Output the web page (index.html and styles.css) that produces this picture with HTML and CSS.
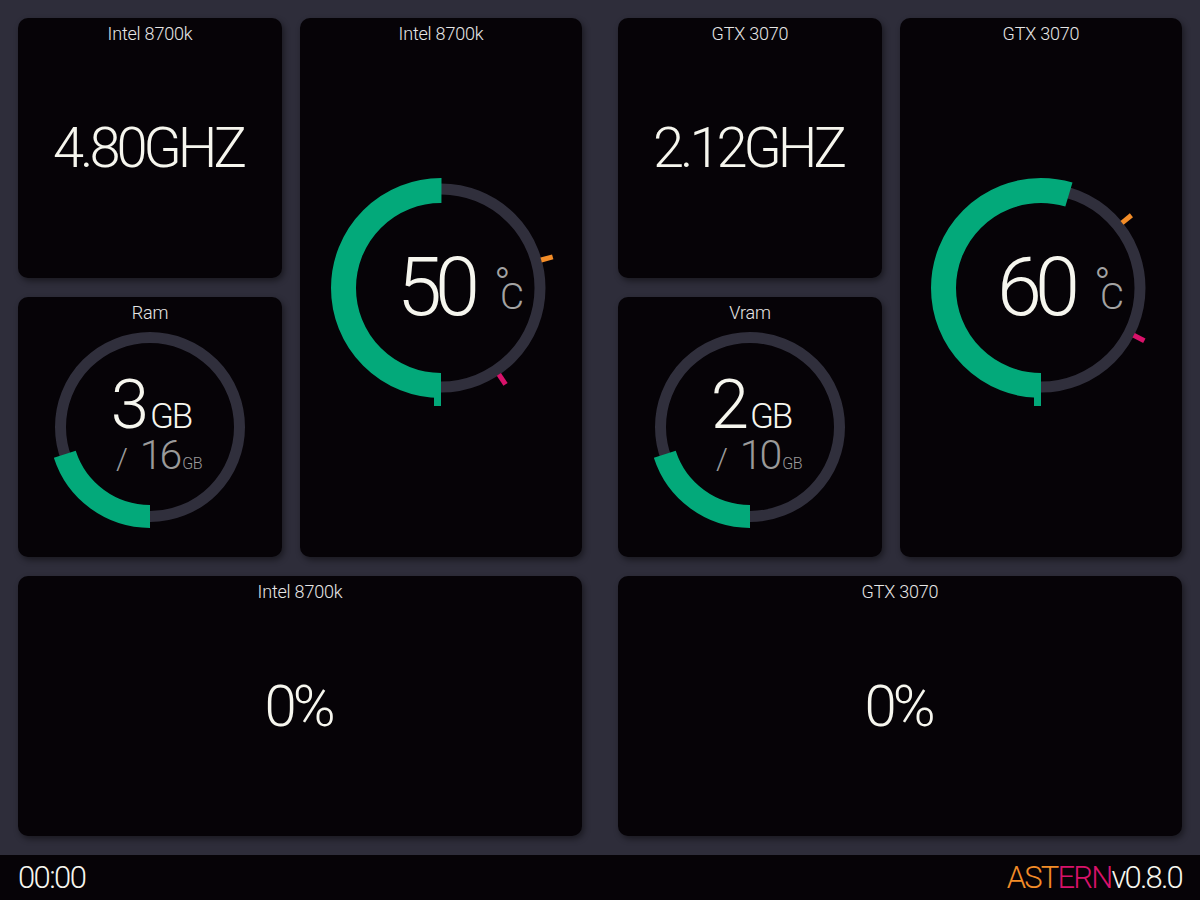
FILE: index.html
```html
<!DOCTYPE html>
<html lang="en">
<head>
<meta charset="utf-8">
<title>Astern dashboard</title>
<link rel="stylesheet" href="styles.css">
</head>
<body>
<main class="dash">
  <section class="half">
    <div class="card card-freq">
      <div class="card-title">Intel 8700k</div>
      <div class="big-value">4.80GHZ</div>
    </div>
    <div class="card card-temp">
      <div class="card-title">Intel 8700k</div>
      <div class="gauge gauge-temp">
        <svg class="gauge-svg" width="240" height="240" viewBox="0 0 240 240">
          <circle cx="120" cy="120" r="99" fill="none" stroke="#302f3c" stroke-width="11"/>
          <circle cx="120" cy="120" r="97.5" fill="none" stroke="#03a97a" stroke-width="25" stroke-dasharray="306.3 1000" transform="rotate(90 120 120)"/>
          <rect x="113" y="228" width="7" height="10" fill="#03a97a"/>
          <line x1="120" y1="16" x2="120" y2="4" stroke="#f28c28" stroke-width="5" transform="rotate(74.4 120 120)"/>
          <line x1="120" y1="16" x2="120" y2="4" stroke="#d8126a" stroke-width="5" transform="rotate(146.2 120 120)"/>
        </svg>
        <div class="temp-label">
          <span class="temp-num">50<span class="temp-unit"><span class="deg">°</span><span class="cel">C</span></span></span>
        </div>
      </div>
    </div>
    <div class="card card-mem">
      <div class="card-title">Ram</div>
      <div class="gauge gauge-mem">
        <svg class="gauge-svg" width="214" height="214" viewBox="0 0 214 214">
          <circle cx="107" cy="107" r="89.5" fill="none" stroke="#302f3c" stroke-width="11"/>
          <circle cx="107" cy="107" r="89.5" fill="none" stroke="#03a97a" stroke-width="23" stroke-dasharray="112.5 1000" transform="rotate(90 107 107)"/>
        </svg>
        <div class="mem-label">
          <div class="mem-used"><span class="mem-num">3</span><span class="mem-unit">GB</span></div>
          <div class="mem-total"><span class="mem-slash">/</span><span class="mem-tnum">16</span><span class="mem-tunit">GB</span></div>
        </div>
      </div>
    </div>
    <div class="card card-load">
      <div class="card-title">Intel 8700k</div>
      <div class="load-value">0%</div>
    </div>
  </section>

  <section class="half">
    <div class="card card-freq">
      <div class="card-title">GTX 3070</div>
      <div class="big-value">2.12GHZ</div>
    </div>
    <div class="card card-temp">
      <div class="card-title">GTX 3070</div>
      <div class="gauge gauge-temp">
        <svg class="gauge-svg" width="240" height="240" viewBox="0 0 240 240">
          <circle cx="120" cy="120" r="99" fill="none" stroke="#302f3c" stroke-width="11"/>
          <circle cx="120" cy="120" r="97.5" fill="none" stroke="#03a97a" stroke-width="25" stroke-dasharray="334.2 1000" transform="rotate(90 120 120)"/>
          <rect x="113" y="228" width="7" height="10" fill="#03a97a"/>
          <line x1="120" y1="16" x2="120" y2="4" stroke="#f28c28" stroke-width="5" transform="rotate(51.2 120 120)"/>
          <line x1="120" y1="16" x2="120" y2="4" stroke="#d8126a" stroke-width="5" transform="rotate(117 120 120)"/>
        </svg>
        <div class="temp-label">
          <span class="temp-num">60<span class="temp-unit"><span class="deg">°</span><span class="cel">C</span></span></span>
        </div>
      </div>
    </div>
    <div class="card card-mem">
      <div class="card-title">Vram</div>
      <div class="gauge gauge-mem">
        <svg class="gauge-svg" width="214" height="214" viewBox="0 0 214 214">
          <circle cx="107" cy="107" r="89.5" fill="none" stroke="#302f3c" stroke-width="11"/>
          <circle cx="107" cy="107" r="89.5" fill="none" stroke="#03a97a" stroke-width="23" stroke-dasharray="112.5 1000" transform="rotate(90 107 107)"/>
        </svg>
        <div class="mem-label">
          <div class="mem-used"><span class="mem-num">2</span><span class="mem-unit">GB</span></div>
          <div class="mem-total"><span class="mem-slash">/</span><span class="mem-tnum">10</span><span class="mem-tunit">GB</span></div>
        </div>
      </div>
    </div>
    <div class="card card-load">
      <div class="card-title">GTX 3070</div>
      <div class="load-value">0%</div>
    </div>
  </section>
</main>
<footer class="footer">
  <span class="clock">00:00</span>
  <span class="brand"><span class="brand-a">AST</span><span class="brand-b">ERN</span><span class="brand-v">v0.8.0</span></span>
</footer>
</body>
</html>
```
FILE: styles.css
```css
* { box-sizing: border-box; }

html, body {
  margin: 0;
  padding: 0;
}

body {
  width: 1200px;
  height: 900px;
  overflow: hidden;
  background: #2e2d3a;
  font-family: Roboto, "Liberation Sans", sans-serif;
  font-weight: 300;
  color: #f6f6ee;
}

.dash {
  display: flex;
  gap: 36px;
  padding: 18px 18px 0;
}

.half {
  display: grid;
  grid-template-columns: 264px 282px;
  grid-template-rows: 260px 260px 260px;
  gap: 19px 18px;
}

.card {
  background: #060307;
  border-radius: 10px;
  box-shadow: 2px 3px 6px rgba(0, 0, 0, 0.45);
  display: grid;
  grid-template-areas: "stack";
  overflow: hidden;
}

.card > * { grid-area: stack; }

.card-freq { grid-column: 1; grid-row: 1; }
.card-temp { grid-column: 2; grid-row: 1 / span 2; }
.card-mem  { grid-column: 1; grid-row: 2; }
.card-load { grid-column: 1 / span 2; grid-row: 3; }

.card-title {
  align-self: start;
  justify-self: center;
  padding-top: 5px;
  font-size: 18px;
  line-height: 22px;
  color: #e6e6e6;
  letter-spacing: -0.2px;
}

.big-value {
  align-self: center;
  justify-self: center;
  font-size: 56px;
  line-height: 1;
  letter-spacing: -4px;
  margin-right: 4px;
}

.load-value {
  align-self: center;
  justify-self: center;
  font-size: 58px;
  line-height: 1;
  letter-spacing: -4px;
  margin-right: 4px;
}

.gauge {
  align-self: center;
  justify-self: center;
  display: grid;
  grid-template-areas: "g";
  place-items: center;
}

.gauge > * { grid-area: g; }

.gauge-svg { display: block; }

.temp-label {
  display: flex;
  justify-content: center;
  margin-left: -12px;
}

.temp-num {
  position: relative;
  font-size: 81px;
  line-height: 1;
  letter-spacing: -7px;
}

.temp-unit {
  position: absolute;
  left: 100%;
  top: 27px;
  margin-left: 27px;
  display: flex;
  flex-direction: column;
  align-items: flex-start;
  color: #a3a3a3;
  letter-spacing: 0;
}

.deg {
  font-size: 44px;
  line-height: 20px;
  margin-bottom: -14px;
  margin-left: -6px;
}

.cel {
  font-size: 37px;
  line-height: 34px;
}

.mem-label {
  display: flex;
  flex-direction: column;
  align-items: center;
  margin-top: 8px;
}

.mem-used {
  display: flex;
  align-items: baseline;
  line-height: 1;
  margin-left: 2px;
}

.mem-num {
  font-size: 69px;
  line-height: 54px;
  letter-spacing: -3px;
}

.mem-unit {
  font-size: 35px;
  margin-left: 4px;
  letter-spacing: -2px;
}

.mem-total {
  display: flex;
  align-items: baseline;
  color: #9a9a9a;
  margin-left: 18px;
  line-height: 42px;
}

.mem-slash {
  font-size: 30px;
  margin-right: 12px;
}

.mem-tnum {
  font-size: 41px;
  letter-spacing: -3px;
}

.mem-tunit {
  font-size: 16px;
  margin-left: 3px;
  letter-spacing: -0.5px;
}

.footer {
  margin-top: 19px;
  height: 45px;
  background: #060307;
  display: flex;
  justify-content: space-between;
  align-items: center;
  padding: 0 18px 0 18px;
  font-size: 31px;
  letter-spacing: -1.6px;
}

.clock { color: #f6f6ee; }

.brand { letter-spacing: -1.8px; }
.brand-a { color: #f28c28; }
.brand-b { color: #d8126a; }
.brand-v { color: #f6f6ee; }
```
